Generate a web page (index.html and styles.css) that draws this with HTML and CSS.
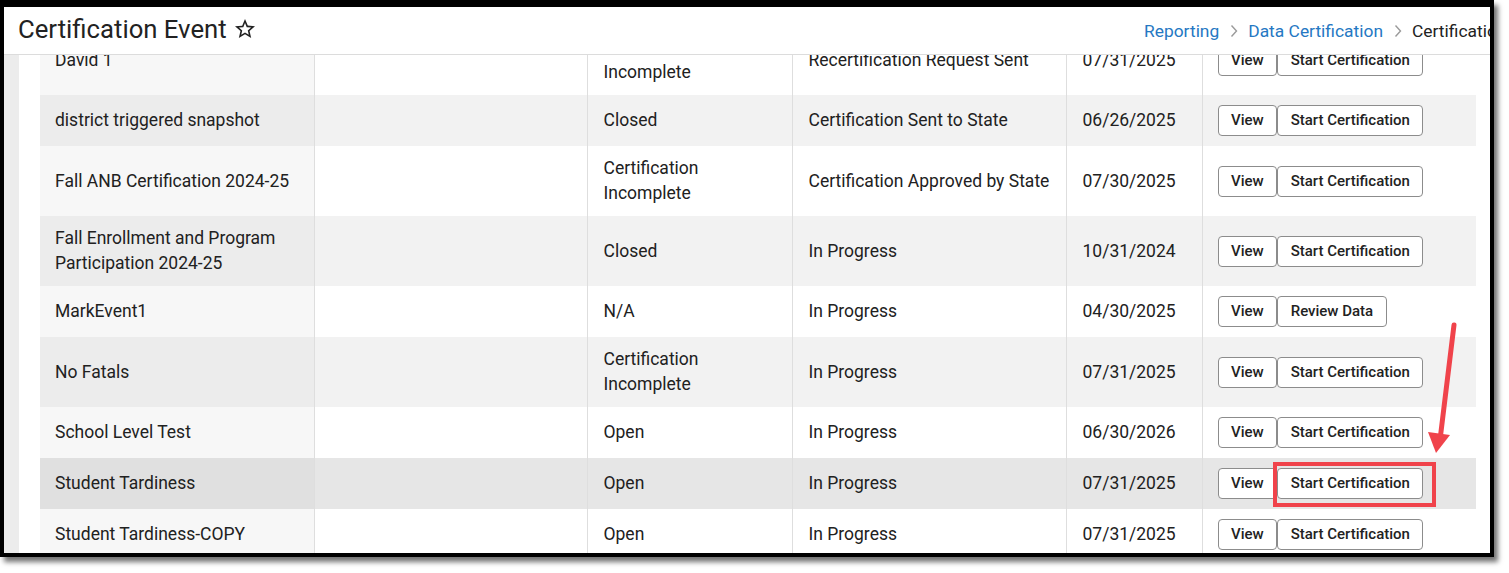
FILE: index.html
```html
<!DOCTYPE html>
<html lang="en">
<head>
<meta charset="utf-8">
<title>Certification Event</title>
<link rel="stylesheet" href="styles.css">
<script src="script.js" defer></script>
</head>
<body>
<div class="frame">
  <header class="page-header">
    <div class="title-block">
      <h1 class="title">Certification Event</h1>
      <svg class="star" viewBox="0 0 24 24" width="24" height="24"><path d="M22 9.24l-7.19-.62L12 2 9.19 8.63 2 9.24l5.46 4.73L5.82 21 12 17.27 18.18 21l-1.63-7.03L22 9.24zM12 15.4l-3.76 2.27 1-4.28-3.32-2.88 4.38-.38L12 6.1l1.71 4.04 4.38.38-3.32 2.88 1 4.28L12 15.4z"/></svg>
    </div>
    <nav class="crumbs">
      <a class="crumb-link">Reporting</a>
      <svg class="chev" viewBox="0 0 8 14" width="8" height="14"><polyline points="1.5,1.5 6.5,7 1.5,12.5"/></svg>
      <a class="crumb-link">Data Certification</a>
      <svg class="chev" viewBox="0 0 8 14" width="8" height="14"><polyline points="1.5,1.5 6.5,7 1.5,12.5"/></svg>
      <span class="crumb-current">Certification Event</span>
    </nav>
  </header>
  <div class="content">
    <div class="side-strip"></div>
    <div class="panel">
      <div class="scroller" id="scroller">
        <table class="grid">
          <colgroup>
            <col class="c1"><col class="c2"><col class="c3"><col class="c4"><col class="c5"><col class="c6">
          </colgroup>
          <tbody>
            <tr>
              <td>David 1</td><td></td><td>Certification<br>Incomplete</td><td>Recertification Request Sent</td><td>07/31/2025</td>
              <td><div class="btns"><button class="btn">View</button><button class="btn">Start Certification</button></div></td>
            </tr>
            <tr class="alt">
              <td>district triggered snapshot</td><td></td><td>Closed</td><td>Certification Sent to State</td><td>06/26/2025</td>
              <td><div class="btns"><button class="btn">View</button><button class="btn">Start Certification</button></div></td>
            </tr>
            <tr>
              <td>Fall ANB Certification 2024-25</td><td></td><td>Certification<br>Incomplete</td><td>Certification Approved by State</td><td>07/30/2025</td>
              <td><div class="btns"><button class="btn">View</button><button class="btn">Start Certification</button></div></td>
            </tr>
            <tr class="alt">
              <td>Fall Enrollment and Program<br>Participation 2024-25</td><td></td><td>Closed</td><td>In Progress</td><td>10/31/2024</td>
              <td><div class="btns"><button class="btn">View</button><button class="btn">Start Certification</button></div></td>
            </tr>
            <tr>
              <td>MarkEvent1</td><td></td><td>N/A</td><td>In Progress</td><td>04/30/2025</td>
              <td><div class="btns"><button class="btn">View</button><button class="btn">Review Data</button></div></td>
            </tr>
            <tr class="alt">
              <td>No Fatals</td><td></td><td>Certification<br>Incomplete</td><td>In Progress</td><td>07/31/2025</td>
              <td><div class="btns"><button class="btn">View</button><button class="btn">Start Certification</button></div></td>
            </tr>
            <tr>
              <td>School Level Test</td><td></td><td>Open</td><td>In Progress</td><td>06/30/2026</td>
              <td><div class="btns"><button class="btn">View</button><button class="btn">Start Certification</button></div></td>
            </tr>
            <tr class="hover">
              <td>Student Tardiness</td><td></td><td>Open</td><td>In Progress</td><td>07/31/2025</td>
              <td><div class="btns"><button class="btn">View</button><button class="btn">Start Certification</button></div></td>
            </tr>
            <tr>
              <td>Student Tardiness-COPY</td><td></td><td>Open</td><td>In Progress</td><td>07/31/2025</td>
              <td><div class="btns"><button class="btn">View</button><button class="btn">Start Certification</button></div></td>
            </tr>
          </tbody>
        </table>
      </div>
    </div>
  </div>
</div>
<svg class="annotations" viewBox="0 0 1509 573" width="1509" height="573">
  <rect class="hl" x="1275" y="464" width="159" height="41"/>
  <line class="arrow-line" x1="1454" y1="325" x2="1440" y2="440"/>
  <polygon class="arrow-head" points="1428,432 1450,435 1436,453"/>
</svg>
</body>
</html>
```

FILE: script.js
```js
document.getElementById('scroller').scrollTop = 30;
```

FILE: styles.css
```css
* { box-sizing: border-box; }
html, body { margin: 0; padding: 0; background: #ffffff; }
body {
  width: 1509px;
  height: 573px;
  overflow: hidden;
  position: relative;
  font-family: Roboto, "Liberation Sans", Arial, sans-serif;
  color: #212121;
}
.frame {
  width: 1494px;
  height: 557px;
  border-style: solid;
  border-color: #000;
  border-width: 7px 4px 4px 4px;
  box-shadow: 4px 5px 5px rgba(0,0,0,0.55);
  background: #fff;
  overflow: hidden;
  display: flex;
  flex-direction: column;
}
.page-header {
  flex: 0 0 48px;
  display: flex;
  align-items: center;
  border-bottom: 1px solid #dcdcdc;
  overflow: hidden;
  white-space: nowrap;
}
.title-block {
  flex: 0 0 1140px;
  display: flex;
  align-items: center;
  padding-left: 14px;
  padding-bottom: 3px;
}
.title {
  margin: 0;
  font-size: 25.7px;
  font-weight: 400;
  color: #222;
}
.star {
  margin-left: 6px;
  fill: #222;
}
.crumbs {
  flex: 0 0 auto;
  display: flex;
  align-items: center;
  font-size: 17.4px;
}
.crumb-link { color: #2578c3; }
.crumb-current { color: #222; }
.chev {
  margin: 0 10px 0 11px;
  fill: none;
  stroke: #9a9a9a;
  stroke-width: 1.4;
}
.content {
  flex: 1 1 auto;
  display: flex;
  min-height: 0;
}
.side-strip {
  flex: 0 0 15px;
  background: #ececec;
}
.panel {
  flex: 1 1 auto;
  padding: 0 14px 0 21px;
  min-width: 0;
  background: #fff;
}
.scroller {
  height: 100%;
  overflow: hidden;
}
.grid {
  width: 1436px;
  table-layout: fixed;
  border-collapse: collapse;
  font-size: 17.5px;
  line-height: 25px;
}
.c1 { width: 274px; }
.c2 { width: 273px; }
.c3 { width: 205px; }
.c4 { width: 274px; }
.c5 { width: 136px; }
.c6 { width: 274px; }
.grid td {
  padding: 10px 10px 10px 16px;
  vertical-align: middle;
  border-right: 1px solid #dedede;
  background: #ffffff;
  white-space: nowrap;
}
.grid td:first-child {
  padding-left: 15px;
  background: #f7f7f7;
}
.grid td:last-child { padding-left: 15px; }
.grid tr.alt td { background: #f2f2f2; }
.grid tr.alt td:first-child { background: #ececec; }
.grid tr.hover td { background: #e6e6e6; }
.grid tr.hover td:first-child { background: #e0e0e0; }
.btns {
  display: flex;
  align-items: center;
}
.btn {
  height: 31px;
  padding: 0 12.5px;
  border: 1px solid #8c8c8c;
  border-radius: 4px;
  background: #fff;
  font-family: Roboto, "Liberation Sans", Arial, sans-serif;
  font-size: 15px;
  font-weight: 500;
  color: #222;
  line-height: 29px;
}
.annotations {
  position: absolute;
  left: 0;
  top: 0;
  pointer-events: none;
}
.hl {
  fill: none;
  stroke: #f0434b;
  stroke-width: 4;
}
.arrow-line {
  stroke: #f0434b;
  stroke-width: 5;
  stroke-linecap: round;
}
.arrow-head { fill: #f0434b; }
```
